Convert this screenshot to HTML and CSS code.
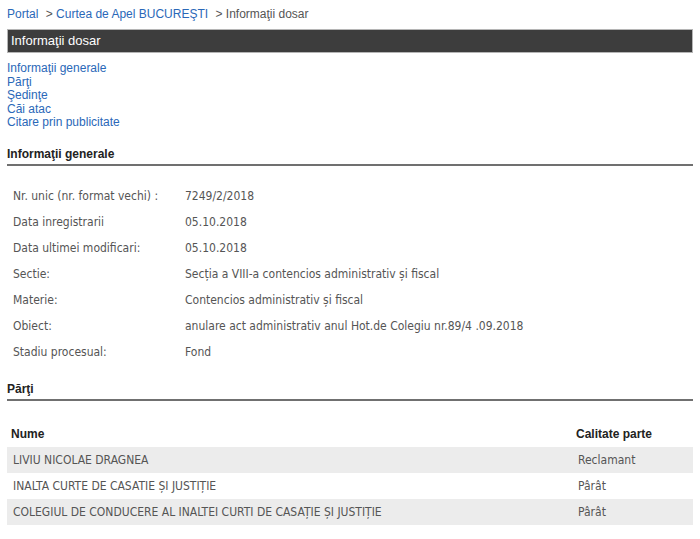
FILE: index.html
```html
<!DOCTYPE html>
<html lang="ro">
<head>
<meta charset="UTF-8">
<meta name="viewport" content="width=device-width, initial-scale=1.0">
<title>Informaţii dosar</title>
<link rel="stylesheet" href="styles.css">
</head>
<body>

<div class="breadcrumb">
    <a href="#">Portal</a>
    <span class="sep">&gt;</span>
    <a href="#">Curtea de Apel BUCUREŞTI</a>
    <span class="sep">&gt;</span>
    <span class="current">Informaţii dosar</span>
</div>

<div class="title-bar">Informaţii dosar</div>

<ul class="toc">
    <li><a href="#generale">Informaţii generale</a></li>
    <li><a href="#parti">Părţi</a></li>
    <li><a href="#">Şedinţe</a></li>
    <li><a href="#">Căi atac</a></li>
    <li><a href="#">Citare prin publicitate</a></li>
</ul>

<h3 class="section-title" id="generale">Informaţii generale</h3>
<table class="info-table">
    <tr><td class="label">Nr. unic (nr. format vechi) :</td><td>7249/2/2018</td></tr>
    <tr><td class="label">Data inregistrarii</td><td>05.10.2018</td></tr>
    <tr><td class="label">Data ultimei modificari:</td><td>05.10.2018</td></tr>
    <tr><td class="label">Sectie:</td><td>Secția a VIII-a contencios administrativ și fiscal</td></tr>
    <tr><td class="label">Materie:</td><td>Contencios administrativ și fiscal</td></tr>
    <tr><td class="label">Obiect:</td><td>anulare act administrativ anul Hot.de Colegiu nr.89/4 .09.2018</td></tr>
    <tr><td class="label">Stadiu procesual:</td><td>Fond</td></tr>
</table>

<h3 class="section-title" id="parti">Părţi</h3>
<table class="parti-table">
    <thead>
        <tr><th>Nume</th><th class="col-calitate">Calitate parte</th></tr>
    </thead>
    <tbody>
        <tr><td>LIVIU NICOLAE DRAGNEA</td><td>Reclamant</td></tr>
        <tr><td>INALTA CURTE DE CASATIE ȘI JUSTIȚIE</td><td>Pârât</td></tr>
        <tr><td>COLEGIUL DE CONDUCERE AL INALTEI CURTI DE CASAȚIE ȘI JUSTIȚIE</td><td>Pârât</td></tr>
    </tbody>
</table>

</body>
</html>
```

FILE: styles.css
```css
body {
    font-family: Arial, "Liberation Sans", sans-serif;
    font-size: 12px;
    margin: 0;
    padding: 7px;
    background: #fff;
    color: #333;
}
a {
    color: #2a68b8;
    text-decoration: none;
}
.breadcrumb {
    line-height: 14px;
    color: #555;
}
.breadcrumb .sep {
    margin-left: 4px;
    color: #555;
}
.title-bar {
    margin-top: 8px;
    height: 22px;
    line-height: 22px;
    padding: 0 3px;
    background: #3d3d3d;
    border: 1px solid #b5b5b5;
    color: #fff;
    font-size: 13px;
}
.toc {
    list-style: none;
    margin: 9px 0 0 0;
    padding: 0;
}
.toc li {
    line-height: 13.5px;
}
.section-title {
    margin: 17px 0 0 0;
    padding-bottom: 3px;
    font-size: 12px;
    line-height: 14px;
    color: #222;
    border-bottom: 2px solid #707070;
}
.info-table {
    margin-top: 17px;
    border-collapse: collapse;
    font-family: Tahoma, "DejaVu Sans Condensed", "Liberation Sans", sans-serif;
    color: #555;
}
.info-table td {
    height: 26px;
    padding: 0 6px;
}
.info-table td.label {
    width: 160px;
}
.parti-table {
    width: 100%;
    margin-top: 20px;
    border-collapse: collapse;
    font-family: Tahoma, "DejaVu Sans Condensed", "Liberation Sans", sans-serif;
}
.parti-table th {
    height: 26px;
    padding: 0 4px;
    text-align: left;
    font-family: Arial, "Liberation Sans", sans-serif;
    color: #222;
}
.parti-table td {
    height: 26px;
    padding: 0 6px;
    color: #555;
}
.parti-table th.col-calitate {
    width: 113px;
}
.parti-table tbody tr:nth-child(odd) {
    background: #ececec;
}
```
